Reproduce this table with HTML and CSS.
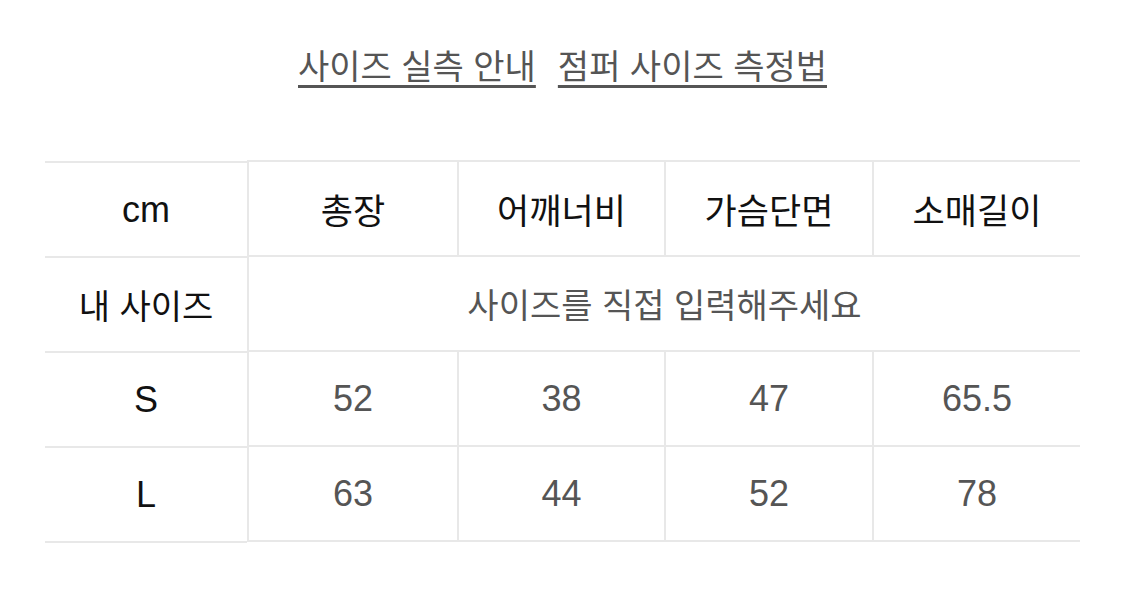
FILE: index.html
```html
<!DOCTYPE html>
<html lang="ko">
<head>
<meta charset="utf-8">
<title>사이즈 실측 안내</title>
<link rel="stylesheet" href="styles.css">
</head>
<body>
<div class="page">
  <nav class="links">
    <a class="link" href="#">사이즈 실측 안내</a>
    <a class="link" href="#">점퍼 사이즈 측정법</a>
  </nav>
  <div class="size-table">
    <div class="label-col">
      <div class="label-cell latin">cm</div>
      <div class="label-cell">내 사이즈</div>
      <div class="label-cell latin">S</div>
      <div class="label-cell latin">L</div>
    </div>
    <div class="data-grid">
      <div class="cell head">총장</div>
      <div class="cell head">어깨너비</div>
      <div class="cell head">가슴단면</div>
      <div class="cell head">소매길이</div>
      <div class="cell wide">사이즈를 직접 입력해주세요</div>
      <div class="cell num">52</div>
      <div class="cell num">38</div>
      <div class="cell num">47</div>
      <div class="cell num">65.5</div>
      <div class="cell num">63</div>
      <div class="cell num">44</div>
      <div class="cell num">52</div>
      <div class="cell num">78</div>
    </div>
  </div>
</div>
</body>
</html>
```
FILE: styles.css
```css
html, body {
  margin: 0;
  padding: 0;
  background: #fff;
}
body {
  font-family: "Liberation Sans", "Noto Sans CJK KR", sans-serif;
  color: #111;
}
.page {
  padding: 46px 45px 0 45px;
}
.links {
  display: flex;
  justify-content: center;
  gap: 22px;
  height: 42px;
  line-height: 42px;
  font-size: 34px;
}
.link {
  color: #555;
  text-decoration: underline;
  text-decoration-thickness: 3px;
  text-underline-offset: 6px;
}
.size-table {
  margin-top: 73px;
  display: flex;
}
.label-col {
  width: 202px;
  flex: none;
  display: flex;
  flex-direction: column;
  border-top: 2px solid #e8e8e8;
}
.label-cell {
  height: 93px;
  border-bottom: 2px solid #e8e8e8;
  display: flex;
  align-items: center;
  justify-content: center;
  font-size: 34px;
  color: #111;
}
.latin {
  font-size: 36px;
}
.data-grid {
  flex: 1;
  display: grid;
  grid-template-columns: 210px 207px 208px 1fr;
  grid-auto-rows: 93px;
  border-top: 2px solid #e8e8e8;
  margin-top: -1px;
  row-gap: 2px;
  background: #e8e8e8;
  padding-bottom: 2px;
  margin-bottom: 2px;
}
.cell {
  background: #fff;
  border-left: 2px solid #e8e8e8;
  display: flex;
  align-items: center;
  justify-content: center;
  font-size: 34px;
}
.head {
  color: #111;
  font-size: 35px;
}
.wide {
  grid-column: 1 / -1;
  color: #555;
  font-size: 34px;
}
.num {
  color: #555;
  font-size: 36px;
}
```
